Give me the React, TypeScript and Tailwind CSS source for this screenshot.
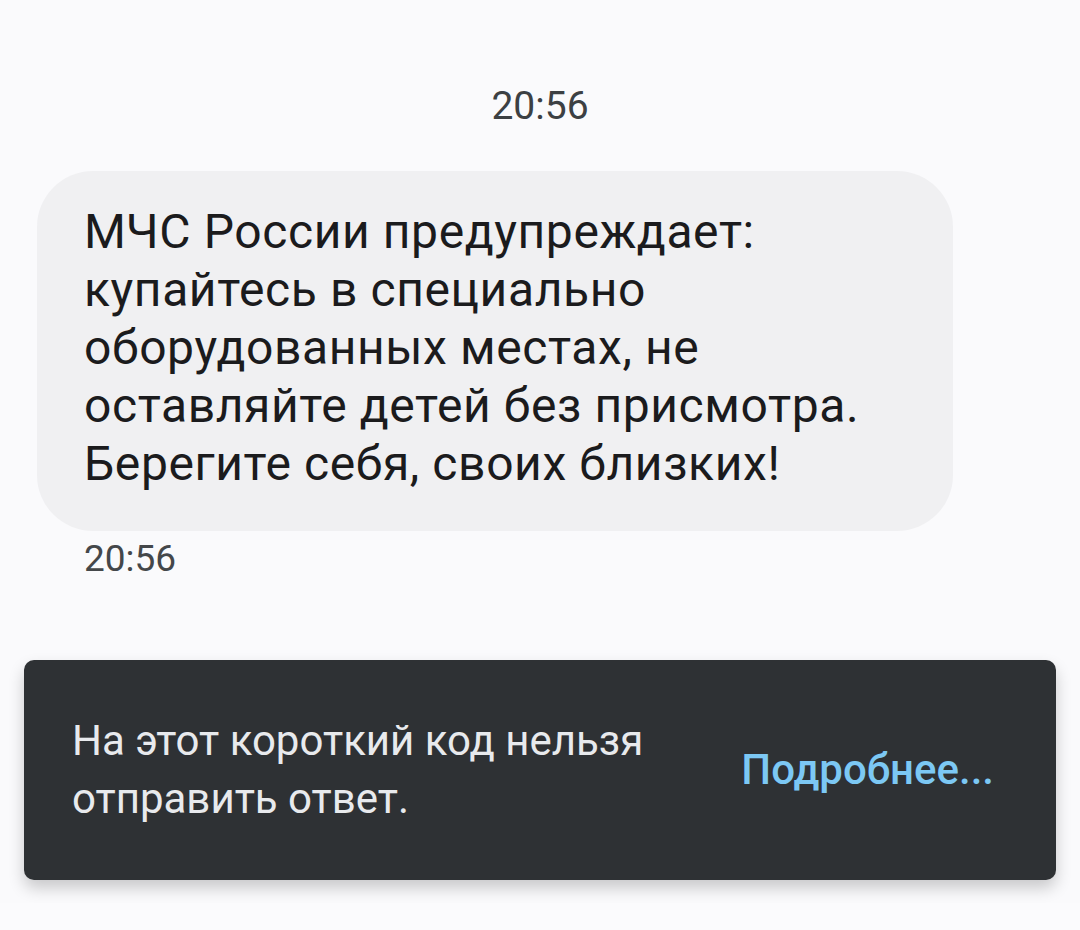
const lines = [
  "МЧС России предупреждает:",
  "купайтесь в специально",
  "оборудованных местах, не",
  "оставляйте детей без присмотра.",
  "Берегите себя, своих близких!",
];

export default function App() {
  return (
    <div className="relative h-[930px] w-full overflow-hidden bg-[#fbfbfd] font-['Roboto',sans-serif]">
      <div className="flex h-[903px] flex-col bg-[#fafafc]">
        <div className="pt-[84px] text-center text-[39px] leading-[44px] text-[#3c4043]">20:56</div>

        <div className="mt-[43px] pl-[37px]">
          <div className="w-[916px] rounded-[56px] bg-[#f0f0f2] pb-[38px] pl-[47px] pr-[30px] pt-[32px] text-[48px] leading-[58px] tracking-[0.6px] text-[#1b1b1d]">
            {lines.map((l) => (
              <div key={l}>{l}</div>
            ))}
          </div>
          <div className="ml-[47px] mt-[7px] text-[37px] leading-[42px] text-[#44474a]">20:56</div>
        </div>

        <div className="mx-[24px] mt-[80px] flex h-[220px] items-center justify-between rounded-[10px] bg-[#2e3134] pl-[48px] pr-[62px] shadow-[0_8px_16px_rgba(0,0,0,0.2)]">
          <div className="text-[42px] leading-[58px] text-[#e8eaed]">
            <div>На этот короткий код нельзя</div>
            <div>отправить ответ.</div>
          </div>
          <button className="text-[42px] leading-[50px] font-medium text-[#7cc8f4]">Подробнее...</button>
        </div>
      </div>
    </div>
  );
}
